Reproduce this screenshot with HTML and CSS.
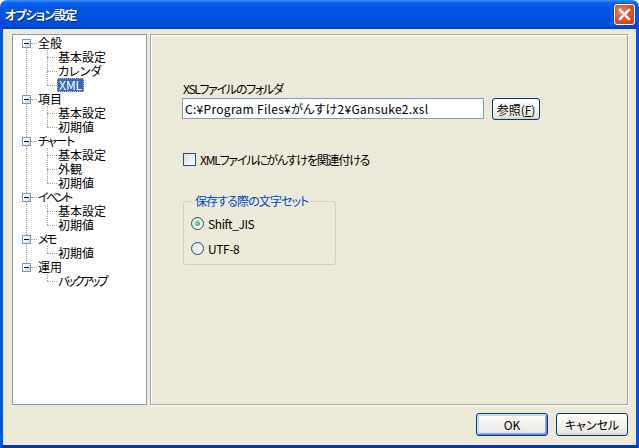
FILE: index.html
```html
<!DOCTYPE html>
<html lang="ja">
<head>
  <meta charset="UTF-8">
  <title>オプション設定</title>
  <link rel="stylesheet" href="styles.css">
</head>
<body>

  <div class="window">
    <!-- Title bar -->
    <div class="titlebar">
      <span class="title">オプション設定</span>
      <span class="close-btn">
        <svg width="13" height="13" viewBox="0 0 13 13">
          <path d="M2 2 L11 11 M11 2 L2 11" stroke="#fff" stroke-width="2.4" stroke-linecap="square"/>
        </svg>
      </span>
    </div>

    <div class="client">
      <div class="main">
        <!-- Tree view -->
        <ul class="tree">
          <li class="node">
            <div class="row root"><span class="box"></span><span class="hline"></span><span class="label">全般</span></div>
            <ul class="children">
              <li class="row leaf"><span class="hline"></span><span class="label">基本設定</span></li>
              <li class="row leaf"><span class="hline"></span><span class="label">カレンダ</span></li>
              <li class="row leaf"><span class="hline"></span><span class="label selected">XML</span></li>
            </ul>
          </li>
          <li class="node">
            <div class="row root"><span class="box"></span><span class="hline"></span><span class="label">項目</span></div>
            <ul class="children">
              <li class="row leaf"><span class="hline"></span><span class="label">基本設定</span></li>
              <li class="row leaf"><span class="hline"></span><span class="label">初期値</span></li>
            </ul>
          </li>
          <li class="node">
            <div class="row root"><span class="box"></span><span class="hline"></span><span class="label narrow">チャート</span></div>
            <ul class="children">
              <li class="row leaf"><span class="hline"></span><span class="label">基本設定</span></li>
              <li class="row leaf"><span class="hline"></span><span class="label">外観</span></li>
              <li class="row leaf"><span class="hline"></span><span class="label">初期値</span></li>
            </ul>
          </li>
          <li class="node">
            <div class="row root"><span class="box"></span><span class="hline"></span><span class="label narrower">イベント</span></div>
            <ul class="children">
              <li class="row leaf"><span class="hline"></span><span class="label">基本設定</span></li>
              <li class="row leaf"><span class="hline"></span><span class="label">初期値</span></li>
            </ul>
          </li>
          <li class="node">
            <div class="row root"><span class="box"></span><span class="hline"></span><span class="label narrower">メモ</span></div>
            <ul class="children">
              <li class="row leaf"><span class="hline"></span><span class="label">初期値</span></li>
            </ul>
          </li>
          <li class="node last">
            <div class="row root"><span class="box"></span><span class="hline"></span><span class="label">運用</span></div>
            <ul class="children">
              <li class="row leaf"><span class="hline"></span><span class="label narrower">バックアップ</span></li>
            </ul>
          </li>
        </ul>

        <!-- Settings page -->
        <div class="panel">
          <div class="field-label">XSLファイルのフォルダ</div>
          <div class="path-row">
            <div class="textbox">C:¥Program Files¥がんすけ2¥Gansuke2.xsl</div>
            <button class="btn browse">参照(<u>F</u>)</button>
          </div>

          <div class="check-row">
            <span class="checkbox"></span>
            <span class="check-text">XMLファイルにがんすけを関連付ける</span>
          </div>

          <fieldset class="group">
            <legend>保存する際の文字セット</legend>
            <div class="radio-row"><span class="radio checked"></span><span class="radio-text">Shift_JIS</span></div>
            <div class="radio-row"><span class="radio"></span><span class="radio-text">UTF-8</span></div>
          </fieldset>
        </div>
      </div>

      <!-- Dialog buttons -->
      <div class="footer">
        <button class="btn default">OK</button>
        <button class="btn">キャンセル</button>
      </div>
    </div>
  </div>

</body>
</html>
```

FILE: styles.css
```css
/* General */
body {
  margin: 0;
  background-color: #ffffff;
  font-family: "Noto Sans CJK JP", "Noto Sans", sans-serif;
  font-size: 12px;
  font-feature-settings: "palt";
  color: #000000;
}

ul {
  list-style: none;
  margin: 0;
  padding: 0;
}

.window {
  width: 639px;
  height: 448px;
  display: flex;
  flex-direction: column;
  border-radius: 7px 7px 0 0;
  overflow: hidden;
}

/* Title bar */
.titlebar {
  height: 29px;
  flex-shrink: 0;
  display: flex;
  align-items: center;
  justify-content: space-between;
  padding: 0 4px 0 5px;
  background: linear-gradient(#3d8ef7 0, #0b61ea 3px, #0457e6 7px, #0053e2 18px, #004bd6 26px, #003fc0 29px);
}

.title {
  color: #ffffff;
  font-weight: bold;
  font-size: 12px;
  line-height: 14px;
  text-shadow: 1px 1px 0 #0a2c8a;
  letter-spacing: -1px;
}

.close-btn {
  width: 19px;
  height: 19px;
  border: 1px solid #ffffff;
  border-radius: 3px;
  display: flex;
  align-items: center;
  justify-content: center;
  background: radial-gradient(circle at 35% 35%, #ec8a6c 0, #e0552f 45%, #c43d18 100%);
}

/* Client area */
.client {
  flex: 1;
  display: flex;
  flex-direction: column;
  background-color: #ece9d8;
  border-left: 3px solid #0055e5;
  border-right: 3px solid #0052dc;
  border-bottom: 3px solid #003ba8;
  padding: 5px 8px 0 9px;
}

.main {
  height: 371px;
  display: flex;
  gap: 3px;
}

/* Tree view */
.tree {
  width: 133px;
  border: 1px solid #7f9db9;
  background-color: #ffffff;
  padding-top: 1px;
}

.node {
  position: relative;
}

.node:not(.last)::before {
  content: "";
  position: absolute;
  left: 13px;
  top: 12px;
  bottom: -3px;
  border-left: 1px dotted #a0a0a0;
}

.children {
  position: relative;
}

.children::before {
  content: "";
  position: absolute;
  left: 34px;
  top: 0;
  bottom: 7px;
  border-left: 1px dotted #a0a0a0;
}

.row {
  height: 14px;
  display: flex;
  align-items: center;
}

.root {
  padding-left: 9px;
}

.leaf {
  padding-left: 34px;
}

.box {
  width: 7px;
  height: 7px;
  border: 1px solid #7898b5;
  background: linear-gradient(135deg, #ffffff 30%, #c8d4e0);
  position: relative;
  flex-shrink: 0;
}

.box::after {
  content: "";
  position: absolute;
  left: 1px;
  top: 3px;
  width: 5px;
  height: 1px;
  background-color: #000000;
}

.hline {
  width: 6px;
  border-top: 1px dotted #a0a0a0;
  flex-shrink: 0;
}

.leaf .hline {
  width: 10px;
}

.label {
  padding: 0 1px;
  line-height: 14px;
  white-space: nowrap;
}

.label.narrow {
  letter-spacing: -1.5px;
}

.label.narrower {
  letter-spacing: -2.5px;
}

.label.selected {
  background-color: #316ac5;
  color: #ffffff;
  border: 1px dotted #e8c060;
  line-height: 12px;
  padding: 0 1px;
}

/* Settings page */
.panel {
  flex: 1;
  border: 1px solid #aca899;
  box-shadow: inset 1px 1px 0 #ffffff, 1px 1px 0 #ffffff;
  padding: 47px 0 0 31px;
}

.field-label {
  line-height: 14px;
  padding-left: 1px;
  letter-spacing: -1.3px;
}

.path-row {
  display: flex;
  align-items: flex-start;
  margin-top: 2px;
}

.textbox {
  width: 298px;
  height: 19px;
  border: 1px solid #7f9db9;
  background-color: #ffffff;
  padding-left: 2px;
  line-height: 19px;
  white-space: nowrap;
  letter-spacing: 0.3px;
}

.btn {
  font-family: inherit;
  font-size: 12px;
  font-feature-settings: "palt";
  color: #000000;
  border: 1px solid #003c74;
  border-radius: 3px;
  background: linear-gradient(#ffffff 0, #f4f3ee 40%, #ebe9e1 85%, #d6d0c5 100%);
  padding: 0;
}

.btn u {
  text-underline-offset: 1px;
}

.browse {
  width: 48px;
  height: 22px;
  margin-left: 8px;
}

.check-row {
  display: flex;
  align-items: center;
  height: 14px;
  margin-top: 32px;
  padding-left: 1px;
}

.checkbox {
  width: 11px;
  height: 11px;
  border: 1px solid #1c5180;
  background: linear-gradient(135deg, #dcdcd7, #ffffff);
  margin-right: 4px;
}

.check-text {
  letter-spacing: -1.2px;
}

.group {
  width: 144px;
  margin: 28px 0 0 1px;
  padding: 8px 0 9px 7px;
  border: 1px solid #d0d0bf;
  border-radius: 3px;
}

.group legend {
  color: #0046d5;
  line-height: 14px;
  padding: 0 2px;
  margin-left: 2px;
  letter-spacing: -0.9px;
}

.radio-row {
  display: flex;
  align-items: center;
  height: 14px;
}

.radio-row + .radio-row {
  margin-top: 11px;
}

.radio-text {
  letter-spacing: -0.4px;
}

.radio {
  width: 11px;
  height: 11px;
  border: 1px solid #1c5180;
  border-radius: 50%;
  background: linear-gradient(135deg, #dcdcd7, #ffffff);
  margin-right: 4px;
  display: flex;
  align-items: center;
  justify-content: center;
}

.radio.checked::after {
  content: "";
  width: 5px;
  height: 5px;
  border-radius: 50%;
  background: radial-gradient(circle at 40% 40%, #8ee08e, #21a121);
}

/* Dialog buttons */
.footer {
  display: flex;
  justify-content: flex-end;
  gap: 8px;
  margin-top: 8px;
}

.footer .btn {
  width: 72px;
  height: 23px;
}

.btn.default {
  box-shadow: inset 1px 1px 0 #cee7ff, inset -1px -1px 0 #6982ee, inset 2px 2px 0 #bcd4f6, inset -2px -2px 0 #89ade4;
}
```
